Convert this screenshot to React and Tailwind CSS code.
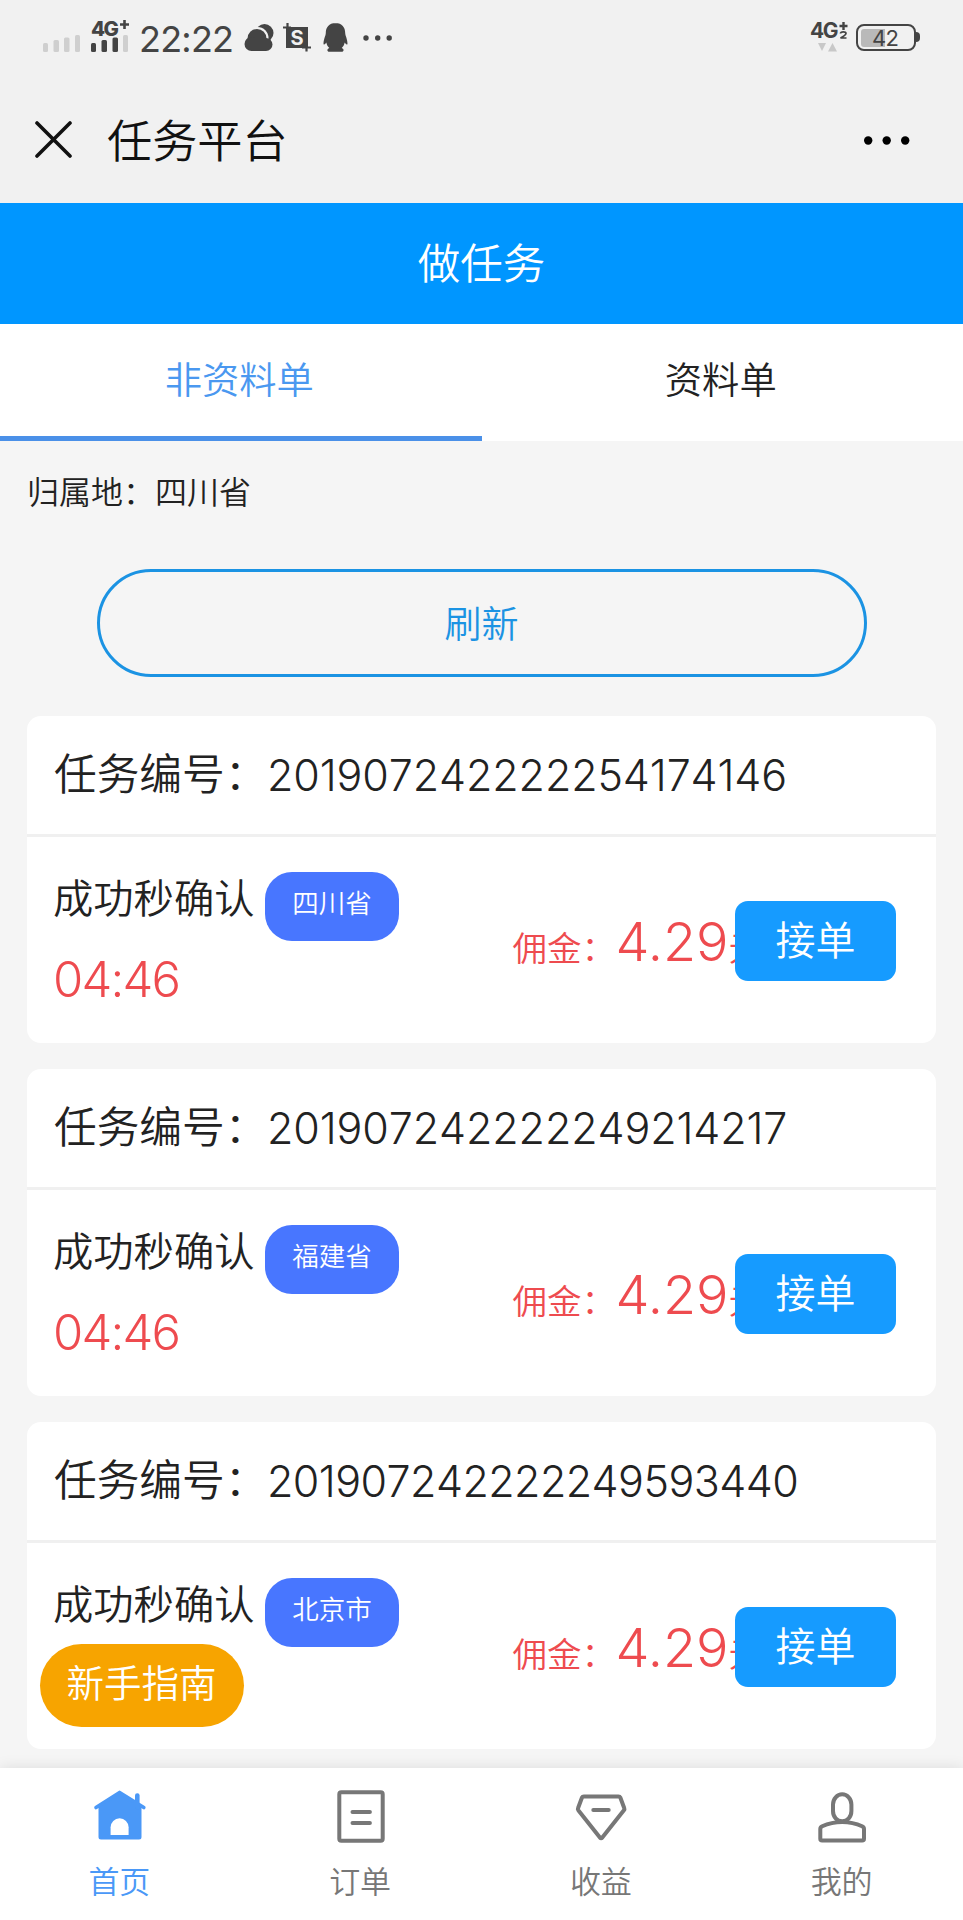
import { useState } from "react";

const tasks = [
  { id: "201907242222254174146", area: "四川省", time: "04:46", money: "4.29", spacing: "tracking-[-0.1px]" },
  { id: "201907242222249214217", area: "福建省", time: "04:46", money: "4.29", spacing: "tracking-[-0.1px]" },
  { id: "201907242222249593440", area: "北京市", time: "", money: "4.29", spacing: "tracking-[-0.55px]" },
];

function HomeIcon() {
  return (
    <svg viewBox="0 0 56 56" className="size-14" fill="currentColor">
      <path d="M27.6 5.5 4 20.5h2.5V50a2.5 2.5 0 0 0 2.5 2.5h38a2.5 2.5 0 0 0 2.5-2.5V20.5H52Z" />
      <path
        d="M4 20.6 27.6 5.4 51.8 20.6"
        fill="none"
        stroke="currentColor"
        strokeWidth="3.6"
        strokeLinecap="round"
        strokeLinejoin="round"
      />
      <rect x="43" y="6.3" width="4.6" height="16" rx="2.2" />
      <path d="M18.6 48V40.3a9 9 0 0 1 18 0V48Z" fill="#fff" />
    </svg>
  );
}

function OrderIcon() {
  return (
    <svg viewBox="0 0 56 56" className="size-14" fill="none" stroke="currentColor" strokeWidth="4" strokeLinecap="round">
      <rect x="6.3" y="5.3" width="43.4" height="48.4" rx="2" />
      <path d="M19.5 25h17.4M19.5 36h17.4" />
    </svg>
  );
}

function IncomeIcon() {
  return (
    <svg viewBox="0.7 0 56 56" className="size-14" fill="none" stroke="currentColor" strokeWidth="4" strokeLinecap="round" strokeLinejoin="round">
      <path d="M10.5 9.4H45.2q1.3 0 1.9 1.3L51 21.2q.4 1-.4 2L29 50.6q-1.2 1.3-2.4 0L5 23.2q-.7-1-.3-2L8.6 10.7Q9.2 9.4 10.5 9.4Z" />
      <path d="M20 22.9h15.4" />
    </svg>
  );
}

function MineIcon() {
  return (
    <svg viewBox="0.5 0 56 56" className="size-14" fill="none" stroke="currentColor" strokeWidth="4" strokeLinejoin="round">
      <path d="M18.5 17.5a9.2 10.2 0 0 1 18.4 0v6.5c0 6-4 10.2-9.2 10.2s-9.2-4.2-9.2-10.2Z" />
      <path d="M27.7 34.9c-7.5 0-14.5 1.8-20 4.4q-1.9.9-1.9 2.7v9.8q0 1.8 1.8 1.8h40.1q1.8 0 1.8-1.8V42q0-1.8-1.9-2.7c-5.5-2.6-12.4-4.4-19.9-4.4Z" />
    </svg>
  );
}

const navs = [
  { title: "首页", icon: HomeIcon },
  { title: "订单", icon: OrderIcon },
  { title: "收益", icon: IncomeIcon },
  { title: "我的", icon: MineIcon },
];

function StatusBar() {
  return (
    <div className="flex h-[75px] justify-between pl-[42px] pr-[43px] text-[#444]">
      <div className="flex">
        <svg width="38" height="75" fill="#cfcfcf">
          <rect x="1" y="43" width="5" height="9" rx="1.5" />
          <rect x="11.5" y="40" width="5.5" height="12" rx="1.5" />
          <rect x="22" y="37.5" width="5.5" height="14.5" rx="1.5" />
          <rect x="33" y="35" width="5" height="17" rx="1.5" />
        </svg>
        <div className="ml-[11px] w-[38px]">
          <div className="flex h-[37px] items-start pt-[18px] text-[20.5px] leading-[21px] font-extrabold tracking-[-1.5px]">
            <span>4G</span>
            <svg width="9" height="9" className="mt-[2px] ml-[2px] shrink-0" stroke="currentColor" strokeWidth="2.6">
              <path d="M4.5 0v9M0 4.5h9" />
            </svg>
          </div>
          <svg width="38" height="18" className="-mt-[2px]" fill="#444">
            <rect x="0" y="8" width="5" height="9" rx="1.5" />
            <rect x="10.5" y="5" width="5.5" height="12" rx="1.5" />
            <rect x="21.5" y="2.5" width="5.5" height="14.5" rx="1.5" />
            <rect x="32" y="0" width="5" height="17" rx="1.5" fill="#cfcfcf" />
          </svg>
        </div>
        <span className="ml-[10px] w-[94px] pt-[17px] text-[36px] leading-[44px] font-normal tracking-[-0.8px]">
          22:22
        </span>
        <svg width="150" height="75" viewBox="243 0 150 75" fill="currentColor" className="ml-[10px]">
          <circle cx="264.5" cy="33" r="9" />
          <circle cx="257.5" cy="38" r="11" fill="#f1f1f1" />
          <circle cx="257" cy="38.5" r="9.5" />
          <circle cx="251.5" cy="44" r="7" />
          <circle cx="266" cy="44.5" r="6.5" />
          <rect x="251" y="38" width="15" height="13" />
          <path d="M286 27h22v21h-22z" />
          <path d="M287.5 23v8M283 27.5h8M306.5 43v8.5M302 47.5h9" stroke="currentColor" strokeWidth="2.2" />
          <text x="297" y="44.5" textAnchor="middle" fill="#f1f1f1" fontSize="20" fontWeight="700" fontFamily="Inter">S</text>
          <path d="M335.5 23c-6.5 0-9.7 4.5-9.7 10 0 3-2.2 5.500-2.300 11 .8 1.500 2-.5 2.800-1.500.7 2.500 1.300 4 3 5.500-2.800 1-2.300 3.800 0 3.800h12.400c2.300 0 2.800-2.800 0-3.800 1.700-1.500 2.300-3 3-5.500.8 1 2 3 2.800 1.500 0-5.500-2.300-8-2.300-11 0-5.500-3.200-10-9.700-10Z" />
          <circle cx="366" cy="38" r="2.7" />
          <circle cx="377.7" cy="38" r="2.7" />
          <circle cx="389.2" cy="38" r="2.7" />
        </svg>
      </div>
      <div className="flex">
        <div className="w-[38px]">
          <div className="flex h-[42px] pt-[20px] text-[21px] leading-[21px] font-bold tracking-[-1.5px]">
            <span>4G</span>
            <svg width="9" height="18" className="mt-[2px] ml-[2px] shrink-0">
              <path d="M4.5 0v8M.5 4h8" stroke="currentColor" strokeWidth="2.4" />
              <path d="M1.5 11.500q0-1.700 2.800-1.700 2.700 0 2.700 1.700 0 1.500-5.500 4.500h6" fill="none" stroke="currentColor" strokeWidth="1.7" />
            </svg>
          </div>
          <svg width="36" height="10" fill="#c8c8c8">
            <path d="M8 1h8l-4 8ZM18 9.500h9l-4.500-8.500Z" />
          </svg>
        </div>
        <div className="mt-[24px] ml-[8px] flex h-[27px] w-[60px] items-center rounded-[8px] border-2 border-[#444] p-[3px]">
          <div className="h-[18px] w-6 shrink-0 rounded-l-[3px] bg-[#b9b9b9]" />
          <span className="-ml-[13px] text-[22px] leading-[18px] font-normal tracking-[-0.8px]">42</span>
        </div>
        <div className="mt-[32px] h-[10px] w-[4px] rounded-r-[4px] bg-[#444]" />
      </div>
    </div>
  );
}

function TitleBar() {
  return (
    <div className="flex h-[128px] items-center pl-[35px] pr-[53px] text-[#111]">
      <svg width="37" height="37" stroke="currentColor" strokeWidth="3.6" strokeLinecap="round">
        <path d="M2 2 35 35M35 2 2 35" />
      </svg>
      <h1 className="ml-[35px] pt-[5px] text-[45.2px] leading-[60px]">任务平台</h1>
      <svg width="46" height="9" className="mt-[2px] ml-auto">
        <circle cx="4.2" cy="4.5" r="4.2" />
        <circle cx="22.7" cy="4.5" r="4.2" />
        <circle cx="41.2" cy="4.5" r="4.2" />
      </svg>
    </div>
  );
}

function TaskCard({ task }) {
  return (
    <div className="h-[327px] rounded-[14px] bg-white">
      <div className="flex h-[121px] items-center border-b-[3px] border-[#f0f0f0] px-[27px] text-[42.7px] leading-[60px] text-[#222]">
        <span className="w-[213px] whitespace-nowrap">任务编号：</span>
        <span className={`text-[43px] font-light [font-kerning:none] ${task.spacing}`}>{task.id}</span>
      </div>
      <div className="flex h-[206px] justify-between pl-[26px] pr-[40px]">
        <div className="pt-[31px]">
          <div className="flex">
            <span className="w-[203px] pt-px text-[40.3px] leading-[60px] whitespace-nowrap text-[#222]">成功秒确认</span>
            <span className="mt-[4px] ml-[9px] h-[69px] w-[134px] rounded-[27px] bg-[#4876ff] text-center text-[26.5px] leading-[63px] text-white">
              {task.area}
            </span>
          </div>
          <p className="mt-[8px] text-[49px] leading-[62px] font-light tracking-[-1.8px] text-[#ee4b4f]">{task.time}</p>
        </div>
        <div className="flex pt-[64px]">
          <div className="flex h-[80px] items-baseline pt-px whitespace-nowrap text-[34.5px] leading-[80px] text-[#ee4b4f]">
            <span className="w-[103px]">佣金：</span>
            <span className="w-[113px] text-[54px]">{task.money}</span>
            <span>元</span>
          </div>
          <button className="relative -ml-[28px] h-[80px] w-[161px] rounded-[13px] bg-[#169bff] text-[40px] leading-[78px] text-white">
            接单
          </button>
        </div>
      </div>
    </div>
  );
}

export default function App() {
  const [tab, setTab] = useState(0);

  return (
    <div className="relative h-[1920px] w-[963px] overflow-hidden bg-[#f5f5f5] font-[Inter,'Noto_Sans_CJK_SC',sans-serif] font-[350]">
      <div className="h-[203px] bg-[#f1f1f1]">
        <StatusBar />
        <TitleBar />
      </div>
      <header className="h-[121px] bg-[#0096ff] text-center text-[42.5px] leading-[122px] text-white">
        做任务
      </header>
      <div className="flex h-[117px] bg-white text-[37.3px] leading-[112px]">
        {["非资料单", "资料单"].map((name, index) => (
          <button
            key={name}
            onClick={() => setTab(index)}
            className={`flex-1 border-b-[5px] pt-px pr-[3px] ${
              tab === index
                ? "border-[#4a90e8] text-[#4a98f0]"
                : "border-transparent text-[#222]"
            }`}
          >
            {name}
          </button>
        ))}
      </div>
      <p className="h-[128px] pl-[27px] text-[32px] leading-[104px] text-[#222]">归属地：四川省</p>
      <button className="mx-auto block h-[108px] w-[770px] rounded-[54px] border-[3px] border-[#1b93e3] pt-[3px] text-[37px] leading-[99px] text-[#1b93e3]">
        刷新
      </button>
      <div className="mt-[39px] flex flex-col gap-[26px] px-[27px]">
        {tasks.map((task) => (
          <TaskCard key={task.id} task={task} />
        ))}
      </div>
      <button className="absolute top-[1644px] left-[40px] h-[83px] w-[204px] rounded-full bg-[#f7a400] pr-px pb-[5px] text-[37.5px] leading-[75px] text-white">
        新手指南
      </button>
      <nav className="relative mt-[19px] flex h-[152px] bg-white shadow-[0_0_14px_rgba(0,0,0,0.1)]">
        {navs.map(({ title, icon: Icon }, index) => (
          <a
            key={title}
            className={`flex flex-1 flex-col items-center pt-[19px] text-[31px] leading-[40px] ${
              index === 0 ? "text-[#4a98f7]" : "text-[#777]"
            }`}
          >
            <Icon />
            <span className="mt-[19px] pr-[2px]">{title}</span>
          </a>
        ))}
      </nav>
    </div>
  );
}
